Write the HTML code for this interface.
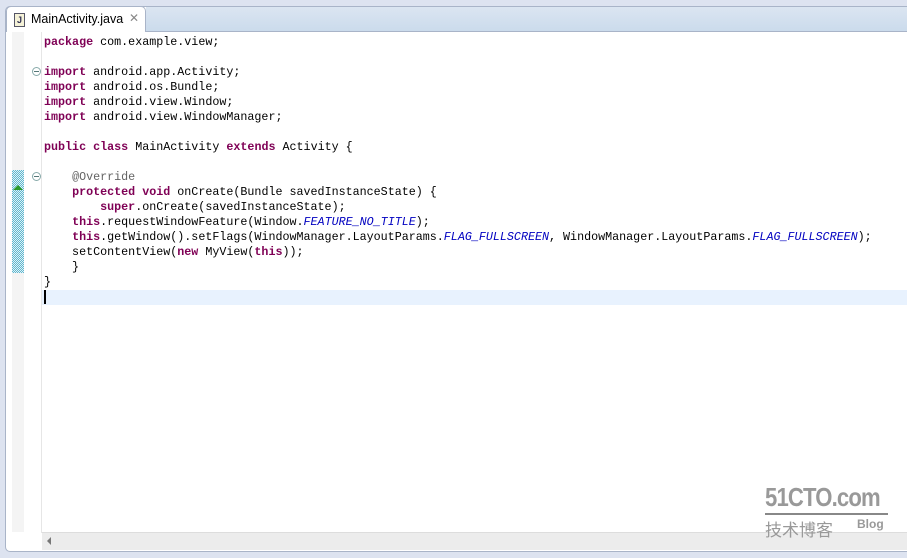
<!DOCTYPE html>
<html><head><style>
body{margin:0;width:907px;height:558px;background:#dde3f0;position:relative;overflow:hidden;font-family:"Liberation Mono",monospace;}
.panel{position:absolute;left:5px;top:6px;width:910px;height:546px;background:#fff;border:1px solid #a9b4c8;border-radius:5px 0 0 5px;box-sizing:border-box;}
.tabbar{position:absolute;left:146px;top:6px;right:0;height:26px;background:linear-gradient(#dbe5f1,#cbdbec);border-bottom:1px solid #a9b4c8;border-top:1px solid #a9b4c8;box-sizing:border-box;}
.tab{position:absolute;left:6px;top:6px;width:140px;height:26px;background:#fff;border:1px solid #a9b4c8;border-bottom:none;border-radius:5px 5px 0 0;box-sizing:border-box;font-family:"Liberation Sans",sans-serif;font-size:12.5px;}
.ruler{position:absolute;left:12px;top:32px;width:12px;height:500px;background:#f4f4f4;}
.hatch{position:absolute;left:12px;top:170px;width:12px;height:103px;background:repeating-conic-gradient(#5fb6cf 0 25%,#e0f2f6 0 50%) 0 0/2px 2px;}
.sep{position:absolute;left:41px;top:32px;width:1px;height:501px;background:#e6e6e6;}
.cur{position:absolute;left:42px;top:290px;right:0;height:15px;background:#e8f2fe;}
.code{position:absolute;left:44px;top:35px;font-size:11.7px;line-height:15px;white-space:pre;color:#000;}
.k{color:#7f0055;font-weight:bold;}
.a{color:#646464;}
.i{color:#0000c0;font-style:italic;}
.fold{position:absolute;width:7px;height:7px;border:1px solid #8aa;border-radius:50%;font-size:0;}
.fold:after{content:"";position:absolute;left:1px;top:3px;width:5px;height:1px;background:#577;}
.hs{position:absolute;left:42px;top:532px;right:0;height:17px;background:#ececec;border-top:1px solid #ddd;}
</style></head><body>
<div class="panel"></div>
<div class="tabbar"></div>
<div class="tab"><span style="position:absolute;left:7px;top:6px;width:9px;height:12px;border:1px solid #556;background:#f5f2d8;font-size:9px;line-height:12px;text-align:center;font-weight:bold;color:#335">J</span><span style="position:absolute;left:24px;top:5px;">MainActivity.java</span><span style="position:absolute;left:122px;top:4px;color:#888;font-size:12px">✕</span></div>
<div class="ruler"></div>
<div class="hatch"></div>
<div style="position:absolute;left:13px;top:185px;width:0;height:0;border-left:5px solid transparent;border-right:5px solid transparent;border-bottom:5px solid #2a9a2a"></div>
<div class="sep"></div>
<div class="cur"></div>
<div class="fold" style="left:32px;top:67px"></div>
<div class="fold" style="left:32px;top:172px"></div>
<div style="position:absolute;left:44px;top:290px;width:2px;height:14px;background:#000"></div>
<div class="code"><span class="k">package</span> com.example.view;

<span class="k">import</span> android.app.Activity;
<span class="k">import</span> android.os.Bundle;
<span class="k">import</span> android.view.Window;
<span class="k">import</span> android.view.WindowManager;

<span class="k">public</span> <span class="k">class</span> MainActivity <span class="k">extends</span> Activity {

    <span class="a">@Override</span>
    <span class="k">protected</span> <span class="k">void</span> onCreate(Bundle savedInstanceState) {
        <span class="k">super</span>.onCreate(savedInstanceState);
    <span class="k">this</span>.requestWindowFeature(Window.<span class="i">FEATURE_NO_TITLE</span>);
    <span class="k">this</span>.getWindow().setFlags(WindowManager.LayoutParams.<span class="i">FLAG_FULLSCREEN</span>, WindowManager.LayoutParams.<span class="i">FLAG_FULLSCREEN</span>);
    setContentView(<span class="k">new</span> MyView(<span class="k">this</span>));
    }
}
</div>
<div class="hs"><span style="position:absolute;left:5px;top:4px;width:0;height:0;border-top:4px solid transparent;border-bottom:4px solid transparent;border-right:4px solid #777"></span></div>
<div style="position:absolute;left:765px;top:482px;font-family:'Liberation Sans',sans-serif;font-weight:bold;font-size:26px;color:#999;letter-spacing:-1px;transform:scaleX(0.85);transform-origin:left;">51CTO.com</div>
<div style="position:absolute;left:765px;top:513px;width:123px;height:2px;background:#888"></div>
<div style="position:absolute;left:765px;top:516px;font-family:'Noto Sans CJK SC',sans-serif;font-size:17px;color:#999;">技术博客</div>
<div style="position:absolute;left:857px;top:517px;font-family:'Liberation Sans',sans-serif;font-weight:bold;font-size:12px;color:#999;">Blog</div>
</body></html>
